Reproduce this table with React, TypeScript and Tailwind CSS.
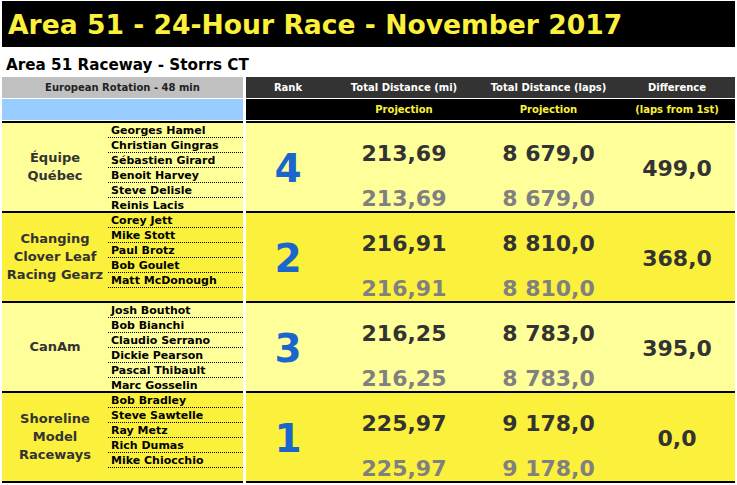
import React from 'react';

interface Team {
  name: string[];
  drivers: string[];
  rank: number;
  miles: string;
  laps: string;
  diff: string;
  light: boolean;
}

const teams: Team[] = [
  {
    name: ['Équipe', 'Québec'],
    drivers: ['Georges Hamel', 'Christian Gingras', 'Sébastien Girard', 'Benoit Harvey', 'Steve Delisle', 'Reinis Lacis'],
    rank: 4,
    miles: '213,69',
    laps: '8 679,0',
    diff: '499,0',
    light: true,
  },
  {
    name: ['Changing', 'Clover Leaf', 'Racing Gearz'],
    drivers: ['Corey Jett', 'Mike Stott', 'Paul Brotz', 'Bob Goulet', 'Matt McDonough'],
    rank: 2,
    miles: '216,91',
    laps: '8 810,0',
    diff: '368,0',
    light: false,
  },
  {
    name: ['CanAm'],
    drivers: ['Josh Bouthot', 'Bob Bianchi', 'Claudio Serrano', 'Dickie Pearson', 'Pascal Thibault', 'Marc Gosselin'],
    rank: 3,
    miles: '216,25',
    laps: '8 783,0',
    diff: '395,0',
    light: true,
  },
  {
    name: ['Shoreline', 'Model', 'Raceways'],
    drivers: ['Bob Bradley', 'Steve Sawtelle', 'Ray Metz', 'Rich Dumas', 'Mike Chiocchio'],
    rank: 1,
    miles: '225,97',
    laps: '9 178,0',
    diff: '0,0',
    light: false,
  },
];

const TeamBlock: React.FC<{ team: Team; last: boolean }> = ({ team, last }) => {
  const bg = team.light ? 'bg-[#ffff99]' : 'bg-[#fbf03b]';
  // last block also closes the table with a bottom rule
  const edge = last ? 'h-[92px] border-y-2' : 'h-[90px] border-t-2';
  return (
    <div className="flex gap-[3px]">
      {/* left: team + drivers */}
      <div className={`w-[241px] ${edge} border-black ${bg} flex`}>
        <div className="w-[106px] flex flex-col items-center justify-center text-[13px] leading-[18px] text-[#333]">
          {team.name.map((n) => (
            <span key={n}>{n}</span>
          ))}
        </div>
        <div className="flex-1 flex flex-col">
          {team.drivers.map((d, i) => {
            const lastSix = team.drivers.length === 6 && i === 5;
            return (
              <div
                key={d}
                className={
                  lastSix
                    ? 'h-[13px] pl-[3px] pt-[1px] text-[11px] leading-[14px] text-black overflow-hidden'
                    : 'h-[15px] pl-[3px] pt-[1px] text-[11px] leading-[13px] text-black border-b border-dotted border-black'
                }
              >
                {d}
              </div>
            );
          })}
        </div>
      </div>

      {/* right: figures */}
      <div className={`w-[489px] ${edge} border-black ${bg} flex`}>
        <div className="w-[84px] h-[88px] flex items-center justify-center text-[39px] leading-[40px] text-[#1a66cc] pt-[3px]">
          {team.rank}
        </div>
        <div className="w-[148px] flex flex-col items-center pt-[19px] gap-[21px] text-[22px] leading-[24px]">
          <span className="text-[#333]">{team.miles}</span>
          <span className="text-[#808080]">{team.miles}</span>
        </div>
        <div className="w-[141px] flex flex-col items-center pt-[19px] gap-[21px] text-[22px] leading-[24px]">
          <span className="text-[#333]">{team.laps}</span>
          <span className="text-[#808080]">{team.laps}</span>
        </div>
        <div className="w-[116px] h-[88px] flex items-center justify-center pt-[3px] text-[22px] leading-[24px] text-[#333]">
          {team.diff}
        </div>
      </div>
    </div>
  );
};

export default function App() {
  return (
    <div className="w-[737px] h-[485px] bg-white pl-[2px] pt-[1px] overflow-hidden font-['DejaVu_Sans',sans-serif] font-bold">
      <div className="w-[733px] h-[46px] bg-black flex items-center pl-[6px] pt-[2px] text-[26.6px] leading-[30px] text-[#fbf03b]">
        Area 51 - 24-Hour Race - November 2017
      </div>

      <div className="h-[30px] pt-[11px] pl-[4px] text-[15.2px] leading-[15px] text-black">
        Area 51 Raceway - Storrs CT
      </div>

      {/* header row 1 */}
      <div className="flex gap-[3px] h-[21px] mb-[1px] text-[10px]">
        <div className="w-[241px] bg-[#c0c0c0] flex items-center justify-center text-[#222]">
          European Rotation - 48 min
        </div>
        <div className="w-[489px] bg-[#333] flex items-center text-white">
          <div className="w-[84px] text-center">Rank</div>
          <div className="w-[148px] text-center">Total Distance (mi)</div>
          <div className="w-[141px] text-center">Total Distance (laps)</div>
          <div className="w-[116px] text-center">Difference</div>
        </div>
      </div>

      {/* header row 2 */}
      <div className="flex gap-[3px] h-[21px] mb-[1px] text-[10px]">
        <div className="w-[241px] bg-[#99ccff]" />
        <div className="w-[489px] bg-black flex items-center text-[#fbf03b]">
          <div className="w-[84px]" />
          <div className="w-[148px] text-center">Projection</div>
          <div className="w-[141px] text-center">Projection</div>
          <div className="w-[116px] text-center">(laps from 1st)</div>
        </div>
      </div>

      {teams.map((t, i) => (
        <TeamBlock key={t.rank} team={t} last={i === teams.length - 1} />
      ))}
    </div>
  );
}
